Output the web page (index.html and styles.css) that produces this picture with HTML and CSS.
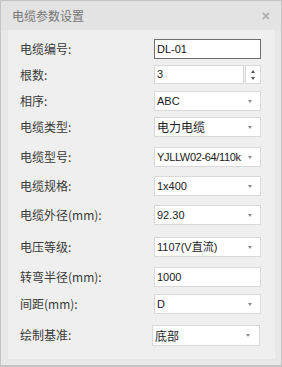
FILE: index.html
```html
<!DOCTYPE html>
<html lang="zh">
<head>
<meta charset="utf-8">
<link rel="stylesheet" href="styles.css">
</head>
<body>
<div class="window">
  <div class="titlebar">
    <span class="title">电缆参数设置</span>
    <svg class="close" width="8" height="8" viewBox="0 0 8 8"><path d="M1 1L7 7M7 1L1 7" stroke="#a9a9a9" stroke-width="1.6"/></svg>
  </div>
  <div class="body">
    <div class="panel">
      <div class="row r26"><span class="label">电缆编号:</span><div class="field focus">DL-01</div></div>
      <div class="row r26"><span class="label">根数:</span>
        <div class="spin"><div class="field grow">3</div><div class="spinbtn"><i class="up"></i><i class="down"></i></div></div>
      </div>
      <div class="row r26"><span class="label">相序:</span><div class="field select"><span class="val">ABC</span></div></div>
      <div class="row r30"><span class="label">电缆类型:</span><div class="field select cjk"><span class="val">电力电缆</span></div></div>
      <div class="row r29"><span class="label">电缆型号:</span><div class="field select"><span class="val tight">YJLLW02-64/110k</span></div></div>
      <div class="row r29"><span class="label">电缆规格:</span><div class="field select"><span class="val">1x400</span></div></div>
      <div class="row r32"><span class="label">电缆外径(mm):</span><div class="field select"><span class="val">92.30</span></div></div>
      <div class="row r30"><span class="label">电压等级:</span><div class="field select"><span class="val">1107(V直流)</span></div></div>
      <div class="row r27"><span class="label">转弯半径(mm):</span><div class="field">1000</div></div>
      <div class="row r31"><span class="label">间距(mm):</span><div class="field select"><span class="val">D</span></div></div>
      <div class="row"><span class="label">绘制基准:</span><div class="field select cjk base"><span class="val">底部</span></div></div>
    </div>
  </div>
</div>
</body>
</html>
```
FILE: styles.css
```css
* { box-sizing: border-box; }
html, body { margin: 0; padding: 0; background: #ffffff; }
.window {
  width: 282px;
  height: 367px;
  border: 1px solid #c4c4c4;
  border-bottom-width: 2px;
  background: #e6e6e6;
  display: flex;
  flex-direction: column;
  font-family: "Noto Sans CJK SC", sans-serif;
}
.titlebar {
  height: 29px;
  flex: none;
  background: #e3e3e3;
  display: flex;
  align-items: center;
  justify-content: space-between;
  padding: 0 11px 0 11px;
}
.title {
  font-size: 12px;
  color: #767676;
  line-height: 14px;
}
.close { display: block; margin-top: 1px; }
.body {
  flex: 1;
  padding: 0 6px 6px 7px;
  background: #e8e8e8;
  display: flex;
}
.panel {
  flex: 1;
  background: #efefef;
  padding: 9px 0 0 12px;
  display: flex;
  flex-direction: column;
}
.row {
  display: flex;
  align-items: flex-start;
  flex: none;
}
.r26 { height: 26px; }
.r27 { height: 27px; }
.r29 { height: 29px; }
.r30 { height: 30px; }
.r31 { height: 31px; }
.r32 { height: 32px; }
.label {
  width: 134px;
  height: 20px;
  line-height: 20px;
  font-size: 12px;
  color: #3a3a3a;
}
.field {
  width: 107px;
  height: 20px;
  background: #ffffff;
  border: 1px solid #d9d9d9;
  font-family: "Liberation Sans", "Noto Sans CJK SC", sans-serif;
  font-size: 11px;
  line-height: 18px;
  color: #222222;
  padding: 0 2px 0 2px;
  white-space: nowrap;
  overflow: hidden;
  position: relative;
}
.val {
  display: block;
  width: 88px;
  white-space: nowrap;
}
.val.tight { letter-spacing: -0.35px; }
.field.focus { border-color: #6e6e6e; color: #111; }
.field.cjk { font-size: 12px; font-family: "Noto Sans CJK SC", sans-serif; }
.select::after {
  content: "";
  position: absolute;
  right: 8px;
  top: 8px;
  border-left: 2.5px solid transparent;
  border-right: 2.5px solid transparent;
  border-top: 3px solid #8a8a8a;
}
.base {
  margin-left: -2px;
  width: 108px;
  height: 21px;
  font-size: 13px;
  line-height: 19px;
}
.base::after { right: 9px; }
.spin {
  width: 107px;
  height: 19px;
  display: flex;
  gap: 1px;
}
.spin .grow { flex: 1; width: auto; height: 19px; line-height: 17px; }
.spinbtn {
  width: 16px;
  height: 19px;
  background: #ffffff;
  border: 1px solid #d9d9d9;
  display: flex;
  flex-direction: column;
  align-items: center;
  justify-content: center;
  gap: 4px;
}
.spinbtn i {
  display: block;
  width: 0;
  height: 0;
  border-left: 2.5px solid transparent;
  border-right: 2.5px solid transparent;
}
.spinbtn .up { border-bottom: 3px solid #555; }
.spinbtn .down { border-top: 3px solid #555; }
```
